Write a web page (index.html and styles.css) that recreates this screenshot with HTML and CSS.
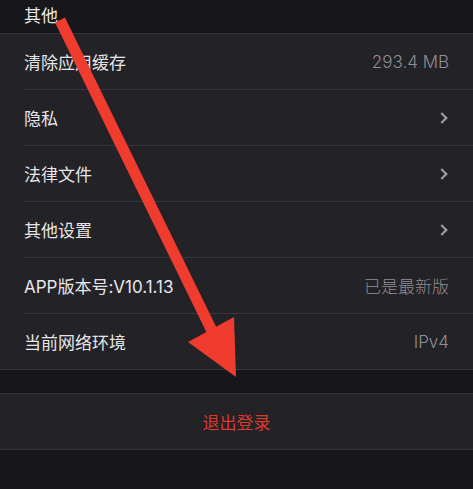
FILE: index.html
```html
<!DOCTYPE html>
<html lang="zh-CN">
<head>
<meta charset="utf-8">
<title>设置</title>
<link rel="stylesheet" href="styles.css">
</head>
<body>
<div class="screen">
  <div class="section-title">其他</div>
  <ul class="group">
    <li class="row"><span class="label">清除应用缓存</span><span class="value">293.4 MB</span></li>
    <li class="row"><span class="label">隐私</span><span class="chevron"></span></li>
    <li class="row"><span class="label">法律文件</span><span class="chevron"></span></li>
    <li class="row"><span class="label">其他设置</span><span class="chevron"></span></li>
    <li class="row"><span class="label">APP版本号:V10.1.13</span><span class="value">已是最新版</span></li>
    <li class="row"><span class="label">当前网络环境</span><span class="value">IPv4</span></li>
  </ul>
  <div class="spacer"></div>
  <div class="logout">退出登录</div>

  <svg class="markup" width="473" height="489" viewBox="0 0 473 489">
    <line x1="60" y1="20" x2="214" y2="335" stroke="#f03b2f" stroke-width="11" stroke-linecap="butt"/>
    <polygon points="188,342 234,317 236,377" fill="#f03b2f"/>
  </svg>
</div>
</body>
</html>
```
FILE: styles.css
```css
* { box-sizing: border-box; }

html, body {
  margin: 0;
  padding: 0;
  background: #17161b;
}

body {
  font-family: "Inter", "Noto Sans CJK SC", sans-serif;
  font-weight: 400;
  color: #e6e6e9;
}

.screen {
  position: relative;
  width: 473px;
  height: 489px;
  overflow: hidden;
  background: #17161b;
}

.section-title {
  height: 33px;
  padding: 0 24px;
  font-size: 17px;
  line-height: 33px;
  color: #e8e8ea;
  display: flex;
  align-items: center;
}

.group {
  list-style: none;
  margin: 0;
  padding: 0 0 0 24px;
  background: #232227;
  border-top: 1px solid #333238;
  border-bottom: 1px solid #37363c;
}

.row {
  display: flex;
  align-items: center;
  justify-content: space-between;
  height: 56px;
  padding-right: 24px;
  border-bottom: 1px solid #37363c;
}

.row:last-child {
  height: 55px;
  border-bottom: none;
}

.label {
  font-size: 17px;
  color: #e6e6e9;
}

.value {
  font-size: 17px;
  font-weight: 300;
  color: #8f8e94;
}

.chevron {
  width: 8px;
  height: 8px;
  margin-right: 3px;
  border-top: 2px solid #a09fa5;
  border-right: 2px solid #a09fa5;
  transform: rotate(45deg);
}

.spacer {
  height: 23px;
}

.logout {
  height: 57px;
  background: #232227;
  border-top: 1px solid #333238;
  border-bottom: 1px solid #333238;
  display: flex;
  align-items: center;
  justify-content: center;
  font-size: 17px;
  color: #d93a30;
}

.markup {
  position: absolute;
  left: 0;
  top: 0;
  pointer-events: none;
}
```
